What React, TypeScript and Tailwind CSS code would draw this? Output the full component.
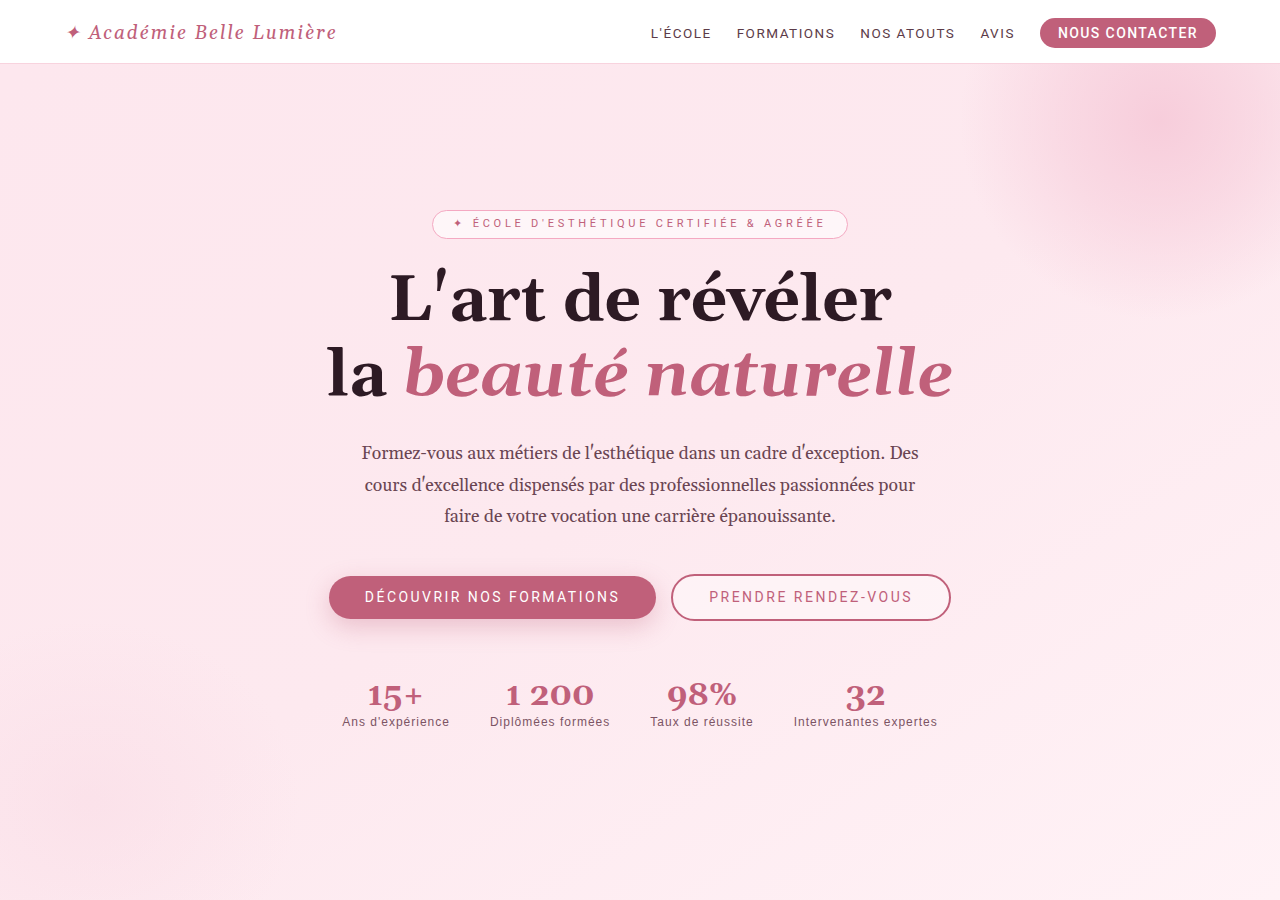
import React from 'react';

const serif = "font-['Georgia','Gelasio','Liberation_Serif',serif]";

const stats = [
  { value: '15+', label: "Ans d'expérience" },
  { value: '1 200', label: 'Diplômées formées' },
  { value: '98%', label: 'Taux de réussite' },
  { value: '32', label: 'Intervenantes expertes' },
];

export default function App() {
  return (
    <div className="min-h-screen bg-[#fde9ef] font-['Roboto','Liberation_Sans',sans-serif]">
      {/* Header */}
      <header className="h-16 bg-white border-b border-[#f8d3de]">
        <div className="max-w-6xl mx-auto h-full flex items-center justify-between pt-[3px]">
          <a className={`${serif} italic text-[19px] tracking-[2px] text-[#c0607a]`}>
            ✦ Académie Belle Lumière
          </a>
          <nav className="flex items-center gap-[25px] text-[13.5px] tracking-[1.5px] text-[#5c3b48]">
            <a>L'ÉCOLE</a>
            <a>FORMATIONS</a>
            <a>NOS ATOUTS</a>
            <a>AVIS</a>
            <a className="h-[30px] flex items-center px-[18px] rounded-full bg-[#c0607a] text-white font-medium text-[14px] tracking-[1.4px]">
              NOUS CONTACTER
            </a>
          </nav>
        </div>
      </header>

      {/* Hero */}
      <section className="relative overflow-hidden h-[836px] bg-gradient-to-br from-[#fde7ee] via-[#fde9ef] to-[#fff2f6]">
        <div className="absolute top-[-144px] right-[-80px] w-[400px] h-[400px] rounded-full bg-[radial-gradient(closest-side,#f7cddb,rgba(247,205,219,0.55)_50%,rgba(253,233,239,0))]" />
        <div className="absolute left-[-120px] top-[556px] w-[420px] h-[360px] rounded-full bg-[radial-gradient(closest-side,rgba(248,215,226,0.4),rgba(253,233,239,0))]" />

        <div className="relative flex flex-col items-center pt-[146px]">
          <div className="px-5 h-[29px] flex items-center rounded-full border border-[#f4a9c2] bg-white/60 text-[11px] tracking-[3.75px] text-[#c0607a]">
            ✦ ÉCOLE D'ESTHÉTIQUE CERTIFIÉE &amp; AGRÉÉE
          </div>

          <h1 className={`${serif} mt-[25px] text-center font-bold text-[64px] leading-[75px] text-[#2d1a24]`}>
            L'art de révéler
            <br />
            la <em className="italic text-[#c0607a]">beauté naturelle</em>
          </h1>

          <p className={`${serif} mt-[25px] max-w-[580px] text-center text-[17.6px] leading-[31.5px] text-[#6a4552]`}>
            Formez-vous aux métiers de l'esthétique dans un cadre d'exception. Des cours d'excellence dispensés par des professionnelles passionnées pour faire de votre vocation une carrière épanouissante.
          </p>

          <div className="mt-[40px] flex items-center gap-[15px]">
            <button className="h-[43px] px-9 rounded-full bg-[#c0607a] text-white text-[14px] tracking-[2.45px] shadow-[0_8px_24px_rgba(192,96,122,0.3)]">
              DÉCOUVRIR NOS FORMATIONS
            </button>
            <button className="h-[47px] px-9 rounded-full border-2 border-[#c0607a] bg-white/40 text-[#c0607a] text-[14px] tracking-[2.5px]">
              PRENDRE RENDEZ-VOUS
            </button>
          </div>

          <div className="mt-[58px] flex items-start gap-10">
            {stats.map((s) => (
              <div key={s.label} className="flex flex-col items-center">
                <span className={`${serif} font-bold text-[32px] leading-[34px] text-[#c0607a]`}>{s.value}</span>
                <span className="font-['Liberation_Sans',Arial,sans-serif] text-[12px] tracking-[1px] text-[#7c5464]">
                  {s.label}
                </span>
              </div>
            ))}
          </div>
        </div>
      </section>
    </div>
  );
}
